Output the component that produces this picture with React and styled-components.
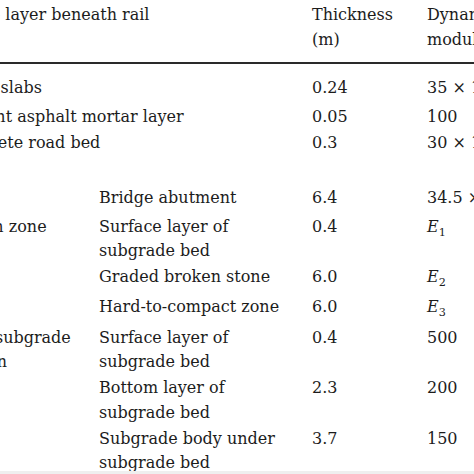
import styled, { createGlobalStyle } from "styled-components";

const GlobalStyle = createGlobalStyle`
  html, body {
    margin: 0;
    padding: 0;
    background: #efefef;
  }
  body {
    font-family: "DejaVu Serif", "Liberation Serif", serif;
    color: #1c1c1c;
  }
`;

const Frame = styled.div`
  width: 474px;
  height: 471px;
  overflow: hidden;
  background: #fff;
  padding-top: 2px;
  box-sizing: border-box;
`;

const Table = styled.table`
  margin-left: -51px;
  border-collapse: collapse;
  table-layout: fixed;
  width: 600px;
  font-size: 16px;
  line-height: 24.5px;
  white-space: nowrap;
`;

const HeadCell = styled.th`
  text-align: left;
  font-weight: normal;
  vertical-align: top;
  line-height: 25px;
  padding: 0 0 9.5px 0;
  border-bottom: 2px solid #2a2a2a;
`;

// $top: extra room above the first body row, $extra: room taken by sub/sup scripts
const Cell = styled.td`
  vertical-align: top;
  padding: ${(p) => 0.75 + (p.$top || 0)}px 0 ${(p) => 0.75 + (p.$extra || 0)}px 0;
`;

const Sup = styled.sup`
  font-size: 70%;
  line-height: 0;
`;

const Sub = styled.sub`
  font-size: 70%;
  line-height: 0;
  font-style: normal;
`;

const Modulus = styled.i`
  font-style: italic;
`;

function Times({ base, exp }) {
  return (
    <>
      {base} × 10<Sup>{exp}</Sup>
    </>
  );
}

function E({ n }) {
  return (
    <Modulus>
      E<Sub>{n}</Sub>
    </Modulus>
  );
}

const groups = [
  {
    label: "Fusion zone",
    items: [
      { name: ["Surface layer of", "subgrade bed"], thick: "0.4", mod: <E n={1} /> },
      { name: ["Graded broken stone"], thick: "6.0", mod: <E n={2} />, extra: 4 },
      { name: ["Hard-to-compact zone"], thick: "6.0", mod: <E n={3} />, extra: 4.5 },
    ],
  },
  {
    label: ["Plain subgrade", "section"],
    items: [
      { name: ["Surface layer of", "subgrade bed"], thick: "0.4", mod: "500" },
      { name: ["Bottom layer of", "subgrade bed"], thick: "2.3", mod: "200" },
      { name: ["Subgrade body under", "subgrade bed"], thick: "3.7", mod: "150" },
    ],
  },
];

function Lines({ text }) {
  const arr = Array.isArray(text) ? text : [text];
  return arr.map((t, i) => (
    <span key={i}>
      {i > 0 && <br />}
      {t}
    </span>
  ));
}

export default function App() {
  return (
    <>
      <GlobalStyle />
      <Frame>
        <Table>
          <colgroup>
            <col style={{ width: 150 }} />
            <col style={{ width: 213 }} />
            <col style={{ width: 115 }} />
            <col style={{ width: 122 }} />
          </colgroup>
          <thead>
            <tr>
              <HeadCell colSpan={2}>Single layer beneath rail</HeadCell>
              <HeadCell>
                Thickness
                <br />
                (m)
              </HeadCell>
              <HeadCell>
                Dynamic
                <br />
                modulus (MPa)
              </HeadCell>
            </tr>
          </thead>
          <tbody>
            <tr>
              <Cell $top={12} $extra={3} colSpan={2}>Track slabs</Cell>
              <Cell $top={12} $extra={3}>0.24</Cell>
              <Cell $top={12} $extra={3}>
                <Times base="35" exp="3" />
              </Cell>
            </tr>
            <tr>
              <Cell colSpan={2}>Cement asphalt mortar layer</Cell>
              <Cell>0.05</Cell>
              <Cell>100</Cell>
            </tr>
            <tr>
              <Cell colSpan={2}>Concrete road bed</Cell>
              <Cell>0.3</Cell>
              <Cell>
                <Times base="30" exp="3" />
              </Cell>
            </tr>
            <tr>
              <Cell $extra={2.5} colSpan={4}>&nbsp;</Cell>
            </tr>
            <tr>
              <Cell $extra={3} />
              <Cell $extra={3}>Bridge abutment</Cell>
              <Cell $extra={3}>6.4</Cell>
              <Cell $extra={3}>
                <Times base="34.5" exp="3" />
              </Cell>
            </tr>
            {groups.map((g, gi) =>
              g.items.map((it, i) => (
                <tr key={`${gi}-${i}`}>
                  {i === 0 && (
                    <Cell rowSpan={g.items.length}>
                      <Lines text={g.label} />
                    </Cell>
                  )}
                  <Cell $extra={it.extra}>
                    <Lines text={it.name} />
                  </Cell>
                  <Cell $extra={it.extra}>{it.thick}</Cell>
                  <Cell $extra={it.extra}>{it.mod}</Cell>
                </tr>
              ))
            )}
          </tbody>
        </Table>
      </Frame>
    </>
  );
}
